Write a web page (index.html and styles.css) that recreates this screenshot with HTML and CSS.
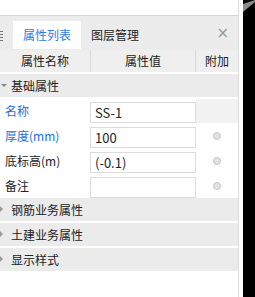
FILE: index.html
```html
<!DOCTYPE html>
<html lang="zh">
<head>
  <meta charset="UTF-8">
  <title>属性列表</title>
  <link rel="stylesheet" href="styles.css">
</head>
<body>
  <div class="screen">
    <div class="panel">
      <div class="top-box"></div>
      <div class="tab-bar">
        <div class="grip"></div>
        <div class="tab active">属性列表</div>
        <div class="tab">图层管理</div>
        <div class="close">×</div>
      </div>

      <div class="row head">
        <div class="c-name">属性名称</div>
        <div class="c-val">属性值</div>
        <div class="c-add">附加</div>
      </div>

      <div class="group open"><span class="arrow"></span>基础属性</div>

      <div class="row prop">
        <div class="c-name blue">名称</div>
        <div class="c-val"><div class="input">SS-1</div></div>
        <div class="c-add off"></div>
      </div>
      <div class="row prop">
        <div class="c-name blue">厚度(mm)</div>
        <div class="c-val"><div class="input">100</div></div>
        <div class="c-add"><span class="dot"></span></div>
      </div>
      <div class="row prop">
        <div class="c-name">底标高(m)</div>
        <div class="c-val"><div class="input">(-0.1)</div></div>
        <div class="c-add"><span class="dot"></span></div>
      </div>
      <div class="row prop">
        <div class="c-name">备注</div>
        <div class="c-val"><div class="input"></div></div>
        <div class="c-add"><span class="dot"></span></div>
      </div>

      <div class="group"><span class="arrow"></span>钢筋业务属性</div>
      <div class="group"><span class="arrow"></span>土建业务属性</div>
      <div class="group"><span class="arrow"></span>显示样式</div>
    </div>
    <div class="side">
      <svg width="12" height="14" viewBox="0 0 12 14"><polygon points="0,4 12,0 12,2 0,12" fill="#8a8a8a"/></svg>
    </div>
  </div>
</body>
</html>
```

FILE: styles.css
```css
* {
  margin: 0;
  padding: 0;
  box-sizing: border-box;
}

body {
  font-family: "Noto Sans CJK SC", "Microsoft YaHei", sans-serif;
  font-size: 12px;
  color: #222;
  background: #fff;
  width: 255px;
  height: 297px;
  overflow: hidden;
}

.screen {
  display: flex;
  height: 297px;
}

.panel {
  width: 239px;
  border-right: 1px solid #dcdcdc;
  height: 100%;
}

.side {
  margin-left: 4px;
  flex: 1;
  background: #000;
}

.side svg {
  display: block;
}

.top-box {
  height: 16px;
  border-bottom: 1px solid #d4d4d4;
}

.tab-bar {
  height: 34px;
  background: #ececec;
  display: flex;
  align-items: flex-end;
  padding-bottom: 1px;
  position: relative;
}

.grip {
  width: 3px;
  height: 10px;
  margin: 0 10px 8px 0;
  background: repeating-linear-gradient(#777 0 1px, transparent 1px 3px);
}

.tab {
  height: 28px;
  line-height: 28px;
  padding: 0 10px;
  font-size: 12px;
}

.tab.active {
  background: #fff;
  color: #2c7be5;
}

.close {
  position: absolute;
  right: 9px;
  top: 8px;
  font-size: 15px;
  color: #999;
  font-family: "DejaVu Sans", sans-serif;
}

.row {
  display: flex;
}

.head {
  height: 22px;
  background: #efefef;
  line-height: 22px;
  text-align: center;
  margin-bottom: 2px;
}

.head .c-name {
  border-right: 1px solid #d8d8d8;
}

.head .c-val {
  border-right: 1px solid #d8d8d8;
}

.c-name {
  width: 91px;
}

.c-val {
  width: 105px;
}

.c-add {
  flex: 1;
}

.group {
  height: 23px;
  line-height: 23px;
  background: #ebebeb;
  padding-left: 11px;
  margin-bottom: 2px;
  position: relative;
}

.group.open {
  margin-bottom: 1px;
}

.arrow {
  position: absolute;
  left: 0;
  top: 8px;
  border-top: 3px solid transparent;
  border-bottom: 3px solid transparent;
  border-left: 3px solid #999;
}

.group.open .arrow {
  left: 1px;
  top: 10px;
  border-left: 3px solid transparent;
  border-right: 3px solid transparent;
  border-top: 3px solid #888;
  border-bottom: 0;
}

.prop {
  height: 25px;
  line-height: 25px;
}

.prop .c-name {
  padding-left: 5px;
  width: 90px;
}

.prop .c-val {
  width: 106px;
  padding-top: 4px;
}

.input {
  height: 21px;
  line-height: 19px;
  border: 1px solid #dcdcdc;
  background: #fff;
  padding-left: 4px;
  font-size: 13px;
}

.blue {
  color: #2070e0;
}

.c-add.off {
  background: #f2f2f2;
  margin-top: 1px;
}

.prop .c-add {
  display: flex;
  justify-content: center;
  align-items: center;
}

.dot {
  width: 8px;
  height: 8px;
  border-radius: 50%;
  background: #e2e2e2;
  border: 1px solid #c4c4c4;
}
```
